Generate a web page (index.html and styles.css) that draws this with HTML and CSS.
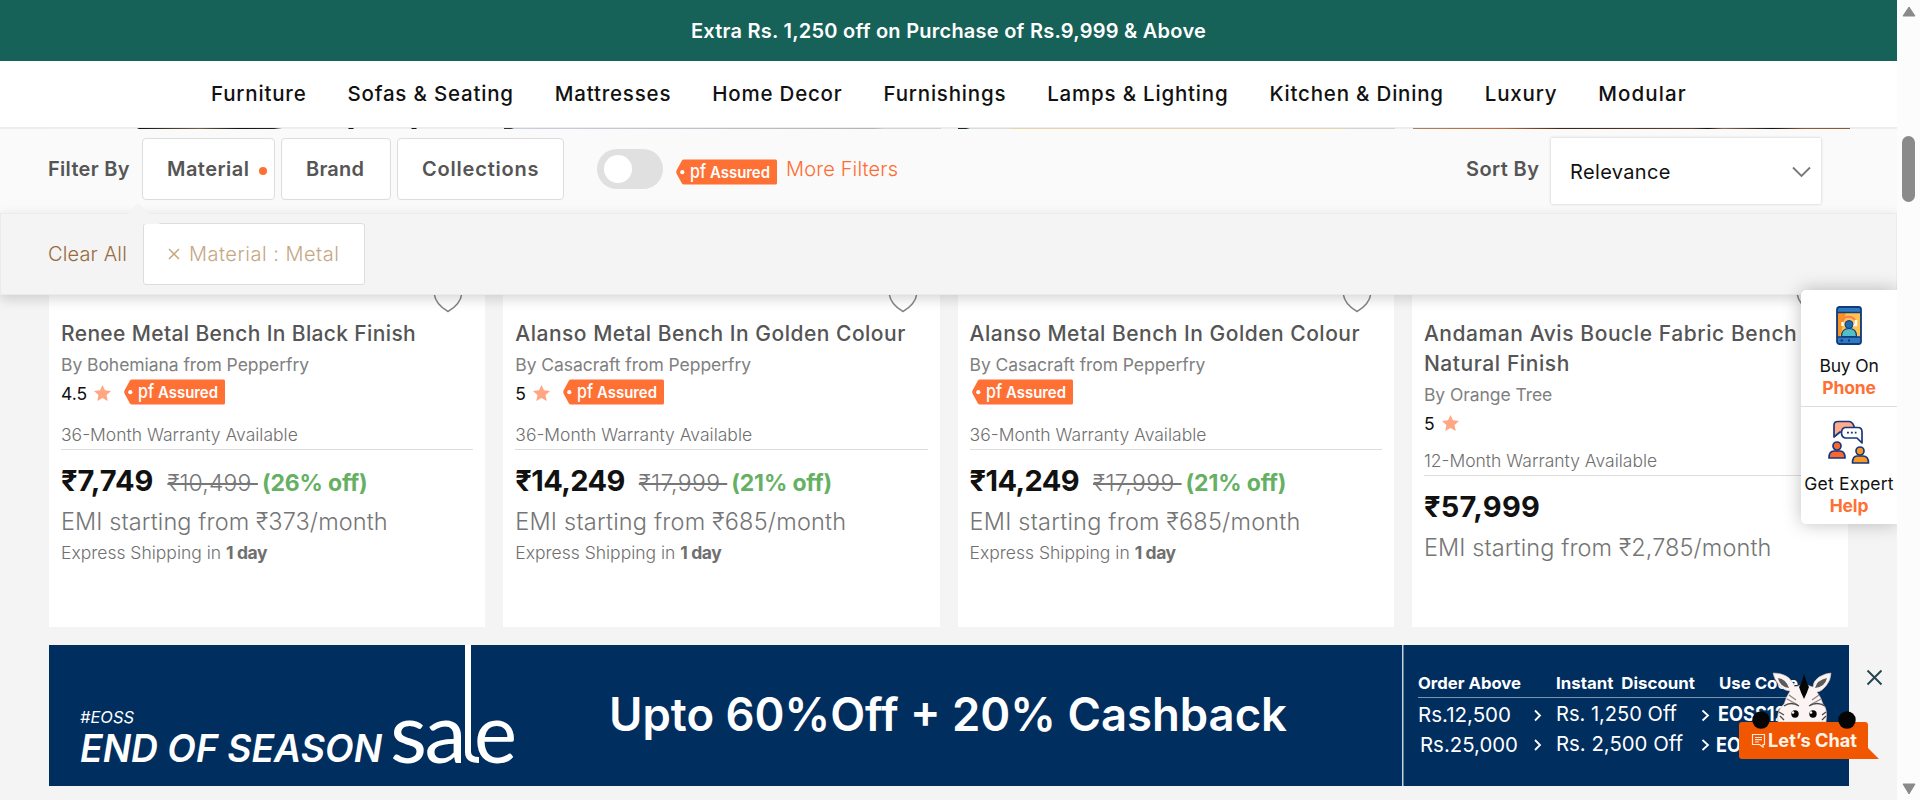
FILE: index.html
```html
<!DOCTYPE html>
<html lang="en">
<head>
<meta charset="utf-8">
<title>Metal Benches</title>
<link rel="stylesheet" href="styles.css">
</head>
<body>
<svg class="defs" width="0" height="0">
  <symbol id="badge" viewBox="0 0 101 26">
    <path d="M8 0.5H99.5Q101 0.5 101 2V24Q101 25.5 99.5 25.5H8Q6.500 25.500 5.800 24.200L0.500 14.500Q0 13 0.500 11.500L5.800 1.800Q6.500 0.500 8 0.500Z" fill="#ff7035"/>
    <circle cx="6.300" cy="13.200" r="2.100" fill="#fff"/>
    <text x="14" y="18.500" class="badge-pf" textLength="16" lengthAdjust="spacingAndGlyphs">pf</text>
    <text x="34" y="18.500" class="badge-text" textLength="60" lengthAdjust="spacingAndGlyphs">Assured</text>
  </symbol>
  <symbol id="star" viewBox="0 0 17 16">
    <path d="M8.500 0L11 5.300L17 6L12.600 10L13.700 16L8.500 13.100L3.300 16L4.400 10L0 6L6 5.300Z" fill="#ffa683"/>
  </symbol>
  <symbol id="heart" viewBox="0 0 30 19">
    <path d="M1 -2C1.500 8 8 13.500 15 17.500C22 13.500 28.500 8 29 -2" fill="none" stroke="#858585" stroke-width="1.500"/>
  </symbol>
</svg>
<div class="window">
<main class="page">
  <div class="promo">Extra Rs. 1,250 off on Purchase of Rs.9,999 &amp; Above</div>
  <nav class="nav">
    <a>Furniture</a><a>Sofas &amp; Seating</a><a>Mattresses</a><a>Home Decor</a><a>Furnishings</a><a>Lamps &amp; Lighting</a><a>Kitchen &amp; Dining</a><a>Luxury</a><a class="modular">Modular</a>
  </nav>
  <div class="photo-edge"><i></i><i></i><i></i><i></i></div>
  <section class="filters">
    <span class="label">Filter By</span>
    <button class="filter material">Material<i class="dot"></i></button>
    <button class="filter brand">Brand</button>
    <button class="filter collections">Collections</button>
    <span class="toggle"><i></i></span>
    <svg class="badge" width="101" height="26"><use href="#badge"/></svg>
    <a class="more">More Filters</a>
    <span class="label sort">Sort By</span>
    <div class="select"><span>Relevance</span>
      <svg width="19" height="12" viewBox="0 0 19 12"><path d="M1 1.500L9.500 10L18 1.500" fill="none" stroke="#777" stroke-width="1.800"/></svg>
    </div>
  </section>
  <section class="applied">
    <span class="pointer"></span>
    <a class="clear">Clear All</a>
    <span class="chip"><svg width="12" height="12" viewBox="0 0 12 12"><path d="M1 1L11 11M11 1L1 11" stroke="#c5a784" stroke-width="1.500"/></svg>Material : Metal</span>
  </section>
  <section class="grid">
    <article class="card">
      <svg class="heart" width="30" height="19"><use href="#heart"/></svg>
      <h2 class="t-renee">Renee Metal Bench In Black Finish</h2>
      <p class="by">By Bohemiana from Pepperfry</p>
      <div class="rating has-badge"><span>4.5</span><svg class="star" width="17" height="16"><use href="#star"/></svg><svg class="tag" width="101" height="26"><use href="#badge"/></svg></div>
      <p class="warranty">36-Month Warranty Available</p>
      <div class="price"><b>₹7,749</b><s class="ten">₹10,499 </s><em>(26% off)</em></div>
      <p class="emi">EMI starting from ₹373/month</p>
      <p class="ship">Express Shipping in <b>1 day</b></p>
    </article>
    <article class="card">
      <svg class="heart" width="30" height="19"><use href="#heart"/></svg>
      <h2>Alanso Metal Bench In Golden Colour</h2>
      <p class="by">By Casacraft from Pepperfry</p>
      <div class="rating has-badge"><span>5</span><svg class="star" width="17" height="16"><use href="#star"/></svg><svg class="tag" width="101" height="26"><use href="#badge"/></svg></div>
      <p class="warranty">36-Month Warranty Available</p>
      <div class="price"><b class="tight">₹14,249</b><s>₹17,999 </s><em>(21% off)</em></div>
      <p class="emi loose">EMI starting from ₹685/month</p>
      <p class="ship">Express Shipping in <b>1 day</b></p>
    </article>
    <article class="card">
      <svg class="heart" width="30" height="19"><use href="#heart"/></svg>
      <h2>Alanso Metal Bench In Golden Colour</h2>
      <p class="by">By Casacraft from Pepperfry</p>
      <div class="rating has-badge"><svg class="tag first" width="101" height="26"><use href="#badge"/></svg></div>
      <p class="warranty">36-Month Warranty Available</p>
      <div class="price"><b class="tight">₹14,249</b><s>₹17,999 </s><em>(21% off)</em></div>
      <p class="emi loose">EMI starting from ₹685/month</p>
      <p class="ship">Express Shipping in <b>1 day</b></p>
    </article>
    <article class="card">
      <svg class="heart" width="30" height="19"><use href="#heart"/></svg>
      <h2 class="t-andaman">Andaman Avis Boucle Fabric Bench<br>Natural Finish</h2>
      <p class="by">By Orange Tree</p>
      <div class="rating"><span>5</span><svg class="star" width="17" height="16"><use href="#star"/></svg></div>
      <p class="warranty">12-Month Warranty Available</p>
      <div class="price"><b class="wide">₹57,999</b></div>
      <p class="emi">EMI starting from ₹2,785/month</p>
    </article>
  </section>
  <svg class="banner" width="1800" height="141" viewBox="49 645 1800 141">
    <rect x="49" y="645" width="1800" height="141" fill="#002e5f"/>
    <g fill="#fff" font-family="Inter, sans-serif">
      <text x="80" y="722.500" font-size="16.500" font-style="italic" textLength="54" lengthAdjust="spacingAndGlyphs">#EOSS</text>
      <text x="80" y="762" font-size="38" font-weight="600" font-style="italic" textLength="302" lengthAdjust="spacingAndGlyphs">END OF SEASON</text>
      <g font-family="Lato, sans-serif" font-size="84">
        <text x="390" y="763" textLength="37" lengthAdjust="spacingAndGlyphs">s</text>
        <text x="424.500" y="763" textLength="42" lengthAdjust="spacingAndGlyphs">a</text>
        <text x="474" y="763" textLength="43" lengthAdjust="spacingAndGlyphs">e</text>
      </g>
      <path d="M468 645V752Q468 760 479 760" fill="none" stroke="#fff" stroke-width="6"/>
      <text x="609" y="731" font-size="46" font-weight="600" textLength="678" lengthAdjust="spacingAndGlyphs">Upto 60%Off + 20% Cashback</text>
      <rect x="1402" y="645" width="1.500" height="141" fill="#c8d0da"/>
      <rect x="1418" y="697" width="392" height="1" fill="#7e93ab"/>
      <g font-size="16.500" font-weight="700">
        <text x="1418" y="689" textLength="103" lengthAdjust="spacingAndGlyphs">Order Above</text>
        <text x="1556" y="689" textLength="139" lengthAdjust="spacingAndGlyphs">Instant&#160; Discount</text>
        <text x="1719" y="689" textLength="79" lengthAdjust="spacingAndGlyphs">Use Code</text>
      </g>
      <g font-size="20.500">
        <text x="1418" y="722" textLength="93" lengthAdjust="spacingAndGlyphs">Rs.12,500</text>
        <text x="1556" y="720.500" textLength="121" lengthAdjust="spacingAndGlyphs">Rs. 1,250 Off</text>
        <text x="1420" y="751.500" textLength="98" lengthAdjust="spacingAndGlyphs">Rs.25,000</text>
        <text x="1556" y="751" textLength="127" lengthAdjust="spacingAndGlyphs">Rs. 2,500 Off</text>
      </g>
      <g font-size="19.500" font-weight="700">
        <text x="1718" y="720.500" textLength="92" lengthAdjust="spacingAndGlyphs">EOSS1250</text>
        <text x="1716" y="751.500" textLength="96" lengthAdjust="spacingAndGlyphs">EOSS2500</text>
      </g>
    </g>
    <g fill="none" stroke="#fff" stroke-width="1.800">
      <path d="M1535 710.500L1540 715.500L1535 720.500M1535 740L1540 745L1535 750M1702.500 710.500L1708 715.500L1702.500 720.500M1702.500 740L1708 745L1702.500 750"/>
    </g>
  </svg>

  <aside class="help">
    <div class="help-item phone">
      <svg width="26" height="39" viewBox="0 0 26 39">
        <rect x="1" y="1" width="24" height="37" rx="2.500" fill="#2e7cbd" stroke="#123a80" stroke-width="1.800"/>
        <rect x="2" y="6.500" width="22" height="24.500" fill="#ffc44f"/>
        <path d="M2 6.500H10L4 31H2Z" fill="#f7941e"/>
        <path d="M1 6.500H25M1 31H25" stroke="#123a80" stroke-width="1.400"/>
        <path d="M6 15A7.500 7.500 0 0 1 19 14" fill="none" stroke="#ff7a57" stroke-width="2"/>
        <path d="M6.500 16V20M20 14V19H13" fill="none" stroke="#fff" stroke-width="2.400"/>
        <circle cx="13" cy="18.500" r="4" fill="#1f6db0" stroke="#123a80"/>
        <path d="M5.500 30.500Q5.500 22.500 13 22.500Q20.500 22.500 20.500 30.500Z" fill="#55bfc7" stroke="#123a80" stroke-width="1.200"/>
        <path d="M4.500 34.500H7M12 34.500H14" stroke="#123a80" stroke-width="1.800"/>
      </svg>
      <span>Buy On</span><strong>Phone</strong>
    </div>
    <div class="help-item expert">
      <svg width="42" height="44" viewBox="0 0 42 44">
        <g stroke="#17377e" stroke-width="1.700" stroke-linejoin="round">
          <path d="M6 17V5Q6 1.500 10 1.500H21Q24 1.500 26 6V12H12Z" fill="#ffab8c"/>
          <path d="M17 7.500H30Q34 7.500 34 12V23L29 18H17Q13.500 17 13.500 12.800Q13.500 8.500 17 7.500Z" fill="#fff"/>
          <circle cx="9" cy="26" r="4" fill="#f9692f"/>
          <path d="M1 38Q1 31 6 31H12Q17 31 17 38Z" fill="#f9692f"/>
          <circle cx="32" cy="31" r="4" fill="#f79a24"/>
          <path d="M24.500 43Q24.500 36 29 36H35Q40.500 36 40.500 43Z" fill="#f79a24"/>
        </g>
        <path d="M19 12.700H28.500" stroke="#17377e" stroke-width="1.800" stroke-dasharray="1.900 2"/>
      </svg>
      <span class="wide">Get Expert</span><strong>Help</strong>
    </div>
  </aside>

  <svg class="close" width="17" height="17" viewBox="0 0 17 17"><path d="M1.500 1.500L15.500 15.500M15.500 1.500L1.500 15.500" stroke="#24454f" stroke-width="1.900"/></svg>

  <svg class="chat" width="142" height="90" viewBox="1738 670 142 90">
    <path d="M1778 722Q1776 711 1784 704Q1786 697 1790 691Q1784 691 1779 685Q1774 679 1773 673Q1783 673 1789 678Q1793 682 1795 687L1804 684L1813 687Q1813 681 1819 677Q1826 673 1831 673Q1831 680 1826 686Q1821 692 1817 692Q1821 697 1823 704Q1828 709 1826 722Z" fill="#fbf4f2" stroke="#c9b3ae" stroke-width=".6"/>
    <path d="M1778 678Q1786 679 1789 688Q1780 687 1778 678ZM1827 678Q1825 687 1815 688Q1817 680 1827 678Z" fill="#5b5b5b"/>
    <path d="M1804 674Q1807 684 1809 687Q1807 693 1804 699Q1801 693 1799 687Q1802 683 1804 674Z" fill="#060606"/>
    <path d="M1789 695L1796 700M1787 699L1798 705M1819 695L1812 700M1821 699L1810 705" fill="none" stroke="#8c8483" stroke-width="1.200"/>
    <path d="M1784 706Q1791 701 1799 706M1825 706Q1817 701 1809 706M1780 716L1784 720M1826 716L1822 720M1779 712L1784 715M1826 712L1822 715" fill="none" stroke="#4d4747" stroke-width="1.300"/>
    <circle cx="1795" cy="714" r="3.700" fill="#050505"/><circle cx="1813" cy="714" r="3.700" fill="#050505"/>
    <circle cx="1793" cy="712.500" r="1.300" fill="#fff"/><circle cx="1811" cy="712.500" r="1.300" fill="#fff"/>
    <path d="M1742 722H1865Q1868 722 1868 725V748L1879 759H1742Q1739 759 1739 756V725Q1739 722 1742 722Z" fill="#f15700"/>
    <circle cx="1761" cy="720" r="8.700" fill="#050505"/><circle cx="1847" cy="720" r="8.700" fill="#050505"/>
    <path d="M1752.500 734.500H1764.500V744.500H1763V747L1759.500 744.500H1752.500ZM1755 737.500H1762M1755 739.700H1762M1755 742H1759" fill="none" stroke="#ffe9dc" stroke-width="1.200"/>
    <text x="1768" y="747" class="chat-text" textLength="89" lengthAdjust="spacingAndGlyphs">Let’s Chat</text>
  </svg>
</main>
<div class="scrollbar">
  <svg width="14" height="11" viewBox="0 0 14 11"><path d="M7 1L13 10H1Z" fill="#8a8a8a" stroke="#8a8a8a" stroke-linejoin="round"/></svg>
  <i class="thumb"></i>
  <svg width="14" height="12" viewBox="0 0 14 12"><path d="M7 11L13 1H1Z" fill="#8a8a8a" stroke="#8a8a8a" stroke-linejoin="round"/></svg>
</div>
</div>
</body>
</html>
```
FILE: styles.css
```css
* { box-sizing: border-box; }
body { margin: 0; background: #f4f4f4; font-family: Inter, sans-serif; color: #111; overflow: hidden; }
h2, p { margin: 0; }
.defs { display: none; }
.window { display: flex; width: 1920px; height: 800px; overflow: hidden; }
.page { position: relative; width: 1897px; height: 800px; overflow: hidden; }
.promo { height: 61px; background: #166259; color: #fff; text-align: center; font-size: 20px; font-weight: 600; line-height: 63px; letter-spacing: .24px; }
.nav { height: 67px; background: #fff; border-bottom: 1px solid #ececec; padding: 0 211px; display: flex; justify-content: space-between; font-size: 20.5px; font-weight: 500; letter-spacing: .8px; line-height: 65px; white-space: nowrap; }
.nav a { margin-right: -.8px; }
.nav .modular { letter-spacing: 1.1px; }
.photo-edge { display: grid; grid-template-columns: repeat(4, 437px); gap: 17.5px; height: 1px; padding-left: 49px; overflow: hidden; background: #ededed; }
.photo-edge i:nth-child(1) { background: linear-gradient(90deg, #eee 88px, #111 90px, #6f6047 150px, #111 190px, #222 225px, #eee 233px, #eee 299px, #111 300px 304px, #eee 305px 362px, #111 363px 367px, #eee 368px); }
.photo-edge i:nth-child(2) { background: linear-gradient(90deg, #263a26 7px, #c9d0db 10px, #b3b3b8 370px, #cfd5d3 380px); }
.photo-edge i:nth-child(3) { background: linear-gradient(90deg, #1c2b18 8px, #d5dde2 12px 50px, #e8d5a0 55px 380px, #cfd5d3 390px); }
.photo-edge i:nth-child(4) { background: linear-gradient(90deg, #a8835f, #c06b35 90px, #3a2413 150px, #5d432c 280px, #111 295px, #8d694d 310px, #111 360px, #8a5a3c 390px); }

.filters { height: 84px; background: #fafafa; padding: 9px 76px 0 48px; display: flex; align-items: flex-start; font-size: 20px; color: #555; white-space: nowrap; }
.label { width: 94px; font-weight: 600; line-height: 63px; letter-spacing: .3px; }
.filter { height: 62px; border: 1px solid #ddd; border-radius: 4px; background: #fff; padding: 0 0 0 24px; margin: 0 6px 0 0; font: 600 20px Inter, sans-serif; color: #555; text-align: left; display: flex; align-items: center; }
.material { width: 133px; letter-spacing: .45px; }
.dot { width: 8px; height: 8px; margin: 3px 0 0 10px; border-radius: 50%; background: #ff7035; }
.brand { width: 110px; letter-spacing: .2px; }
.collections { width: 167px; letter-spacing: .8px; margin-right: 33px; }
.toggle { width: 66px; height: 40px; border-radius: 20px; background: #e0e0e0; padding: 6px 7px; margin: 11px 13px 0 0; }
.toggle i { display: block; width: 28px; height: 28px; border-radius: 50%; background: #fff; }
.badge { margin-top: 21px; }
.badge-pf { font: 500 20px Inter, sans-serif; fill: #fff; }
.badge-text { font: 600 15.5px Inter, sans-serif; fill: #fff; }
.more { margin-left: 9px; font-weight: 300; color: #ff6c30; line-height: 62px; letter-spacing: .15px; }
.sort { margin-left: auto; width: 85px; line-height: 62px; letter-spacing: .4px; }
.select { width: 270px; height: 66px; border-radius: 1px; background: #fff; box-shadow: 0 0 3px rgba(0,0,0,.22); padding: 2px 10px 0 19px; color: #111; display: flex; justify-content: space-between; align-items: center; letter-spacing: .35px; }

.applied { position: relative; z-index: 1; height: 82px; background: #f4f4f4; border: 1px solid #ebebeb; box-shadow: 0 4px 12px rgba(0,0,0,.16); padding: 9px 0 0 47px; display: flex; font-size: 20px; font-weight: 300; }
.pointer { position: absolute; left: 115px; top: -11px; width: 44px; height: 21px; z-index: 2; background: #f4f4f4; clip-path: polygon(50% 0, 100% 100%, 0 100%); }
.clear { width: 95px; color: #976c3d; line-height: 62px; letter-spacing: .15px; }
.chip { width: 222px; height: 62px; border: 1px solid #ddd; border-radius: 3px; background: #fff; color: #c5a784; display: flex; align-items: center; gap: 9px; padding-left: 24px; letter-spacing: .5px; }

.grid { display: grid; grid-template-columns: repeat(4, 436.3px); gap: 18px; height: 332px; margin: 0 0 18px 49px; }
.card { position: relative; background: #fff; padding: 24px 12px 0; white-space: nowrap; }
.heart { position: absolute; right: 22px; top: -1px; }
h2 { font-size: 21px; line-height: 30px; font-weight: 500; color: #555; letter-spacing: .5px; }
.t-renee { letter-spacing: .36px; }
.t-andaman { letter-spacing: .57px; }
.by { margin-top: 1px; font-size: 17.5px; line-height: 30px; color: #808080; letter-spacing: -.06px; }
.rating { display: flex; height: 22px; font-size: 17.5px; line-height: 22px; }
.rating span { padding-top: 3px; margin-right: 7px; }
.has-badge { height: 26px; }
.star { margin-top: 5px; }
.tag { margin: -1px 0 0 13px; }
.tag.first { margin-left: 2px; }
.warranty { margin-top: 16px; height: 28px; border-bottom: 1px solid #ddd; font-size: 17.5px; line-height: 26px; font-weight: 300; color: #6f6f6f; }
.price { margin-top: 13px; height: 36px; line-height: 36px; display: flex; align-items: baseline; }
.price b { font-size: 29px; font-weight: 700; }
.price .wide { letter-spacing: .3px; }
.tight { letter-spacing: -.6px; }
.price s { margin: 0 4px 0 14px; font-size: 23px; font-weight: 300; color: #777; white-space: pre; letter-spacing: .4px; }
.price .ten { letter-spacing: .1px; }
.price em { font-style: normal; font-size: 23px; font-weight: 700; color: #66b063; letter-spacing: -.15px; }
.emi { margin-top: 7px; font-size: 23.5px; line-height: 32px; font-weight: 300; color: #757575; letter-spacing: .1px; }
.emi.loose { letter-spacing: .21px; }
.ship { margin-top: 2px; font-size: 17.5px; line-height: 26px; font-weight: 300; color: #707070; }
.ship b { font-weight: 700; letter-spacing: -.4px; }
.banner { display: block; margin-left: 49px; }

.help { position: absolute; z-index: 3; left: 1801px; top: 290px; width: 96px; height: 234px; background: #fff; border-radius: 5px 0 0 5px; box-shadow: 0 0 18px rgba(0,0,0,.25); }
.help-item { display: flex; flex-direction: column; align-items: center; font-size: 17.5px; line-height: 22px; letter-spacing: -.2px; }
.help-item strong { font-weight: 700; color: #ff7035; }
.phone { height: 117px; padding-top: 16px; border-bottom: 1px solid #ddd; }
.phone span { margin-top: 10px; }
.expert { padding-top: 13px; }
.expert span { margin-top: 9px; }
.expert .wide { letter-spacing: .2px; white-space: nowrap; }
.close { position: absolute; left: 1866px; top: 669px; }
.chat { position: absolute; z-index: 3; left: 1738px; top: 670px; }
.chat-text { font: 700 18.5px Inter, sans-serif; fill: #fff3ea; }
.scrollbar { width: 23px; background: #fcfcfc; display: flex; flex-direction: column; align-items: center; padding: 6px 0 5px; }
.thumb { width: 13px; height: 66px; margin: 119px 0 auto; border-radius: 7px; background: #8a8a8a; }
```
